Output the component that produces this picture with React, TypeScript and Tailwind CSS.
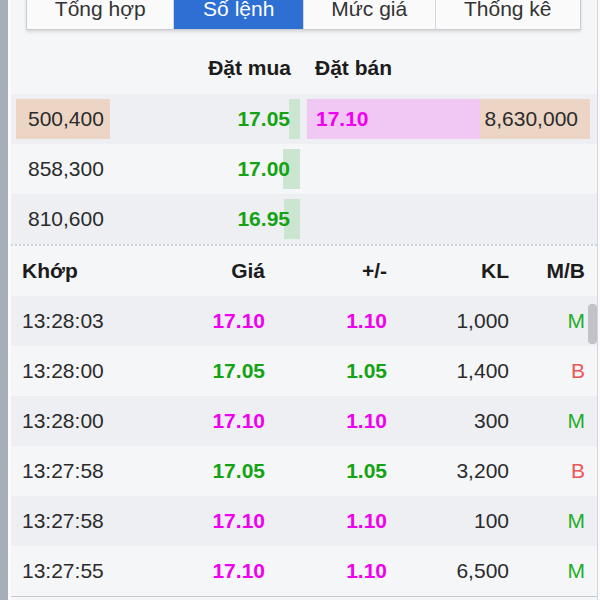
import React from 'react';

const tabs = [
  { label: 'Tổng hợp', w: 'w-[147px]' },
  { label: 'Số lệnh', w: 'w-[130px]', active: true },
  { label: 'Mức giá', w: 'w-[132px]' },
  { label: 'Thống kê', w: 'w-[146px]' },
];

const book = [
  { bv: '500,400', bp: '17.05', bar: 11, ap: '17.10', av: '8,630,000', hl: true },
  { bv: '858,300', bp: '17.00', bar: 17 },
  { bv: '810,600', bp: '16.95', bar: 16 },
];

const trades = [
  { t: '13:28:03', p: '17.10', c: '1.10', kl: '1,000', side: 'M' },
  { t: '13:28:00', p: '17.05', c: '1.05', kl: '1,400', side: 'B' },
  { t: '13:28:00', p: '17.10', c: '1.10', kl: '300', side: 'M' },
  { t: '13:27:58', p: '17.05', c: '1.05', kl: '3,200', side: 'B' },
  { t: '13:27:58', p: '17.10', c: '1.10', kl: '100', side: 'M' },
  { t: '13:27:55', p: '17.10', c: '1.10', kl: '6,500', side: 'M' },
];

const priceColor = (p: string) => (p === '17.10' ? 'text-[#f000f0]' : 'text-[#14a314]');

export default function App() {
  return (
    <div className="w-[600px] h-[600px] overflow-hidden flex bg-white font-['Liberation_Sans',Arial,sans-serif] text-[21px] text-[#2b2b2b]">
      <div className="w-2 bg-[#a5aeb9]" />
      <div className="w-[3px] bg-[#fcfcfd]" />

      <div className="relative w-[587px] flex flex-col bg-[#f5f6f8] border-r border-[#d3d6db]">
        {/* Tabs */}
        <div className="ml-[15px] mt-[-13px] flex h-[43px] w-[555px] border border-[#c9cbcf] bg-[#fafafa] shadow-[0_2px_3px_rgba(0,0,0,0.12)]">
          {tabs.map((tab, i) => (
            <div
              key={tab.label}
              className={`${tab.w} flex items-center justify-center ${i > 0 ? 'border-l border-[#d4d6da]' : ''} ${
                tab.active ? 'bg-[#2d6fd3] text-white' : 'text-[#333]'
              }`}
            >
              {tab.label}
            </div>
          ))}
        </div>

        {/* Order book header */}
        <div className="h-[64px] flex items-end pb-[14px] font-bold text-[#1c1c1c] leading-6">
          <div className="w-[292px] text-right pr-[12px]">Đặt mua</div>
          <div className="pl-[12px]">Đặt bán</div>
        </div>

        {/* Order book rows */}
        {book.map((r, i) => (
          <div
            key={r.bv}
            className={`h-[50px] flex items-center pl-[5px] pr-[7px] ${i % 2 === 0 ? 'bg-[#edeff3]' : 'bg-[#f5f6f8]'}`}
          >
            <div className={`w-[94px] h-10 flex items-center pl-3 ${r.hl ? 'bg-[#ecd5c4]' : ''}`}>{r.bv}</div>
            <div className="flex-1" />
            <div className="relative w-[120px] h-10 flex items-center justify-end pr-[10px]">
              <div className="absolute right-0 top-0 h-10 bg-[#cce5d0]" style={{ width: r.bar }} />
              <span className={`relative font-bold ${priceColor(r.bp)}`}>{r.bp}</span>
            </div>
            {r.ap ? (
              <>
                <div className="ml-[7px] w-[173px] h-10 flex items-center pl-[9px] bg-[#f1c8f3]">
                  <span className="font-bold text-[#f000f0]">{r.ap}</span>
                </div>
                <div className="w-[110px] h-10 flex items-center justify-end pr-3 bg-[#ecd5c4]">{r.av}</div>
              </>
            ) : (
              <div className="ml-[7px] w-[283px]" />
            )}
          </div>
        ))}

        <div className="border-t-2 border-dotted border-[#cfd2d6]" />

        {/* Matched trades */}
        <div className="relative">
          <div className="h-[50px] grid grid-cols-[143px_100px_122px_122px_76px] items-center pl-[11px] font-bold text-[#1c1c1c]">
            <div>Khớp</div>
            <div className="text-right">Giá</div>
            <div className="text-right">+/-</div>
            <div className="text-right">KL</div>
            <div className="text-right">M/B</div>
          </div>
          {trades.map((r, i) => (
            <div
              key={i}
              className={`h-[50px] grid grid-cols-[143px_100px_122px_122px_76px] items-center pl-[11px] ${
                i % 2 === 0 ? 'bg-[#edeff3]' : 'bg-[#f5f6f8]'
              }`}
            >
              <div>{r.t}</div>
              <div className={`text-right font-bold ${priceColor(r.p)}`}>{r.p}</div>
              <div className={`text-right font-bold ${priceColor(r.p)}`}>{r.c}</div>
              <div className="text-right">{r.kl}</div>
              <div className={`text-right ${r.side === 'M' ? 'text-[#1fae2a]' : 'text-[#ee5555]'}`}>{r.side}</div>
            </div>
          ))}
          <div className="border-t border-[#c6c9ce]" />
          <div className="absolute right-0 top-[58px] w-[9px] h-10 rounded bg-[#c1c3c6]" />
        </div>
      </div>

      <div className="flex-1 bg-[#fbfbfc]" />
    </div>
  );
}
